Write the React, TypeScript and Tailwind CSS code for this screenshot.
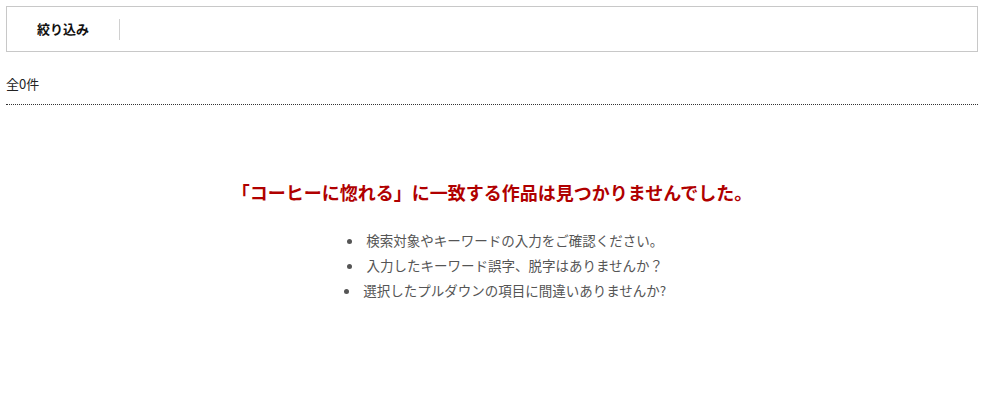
import React from "react";

const tips = [
  "検索対象やキーワードの入力をご確認ください。",
  "入力したキーワード誤字、脱字はありませんか？",
  "選択したプルダウンの項目に間違いありませんか?",
];

export default function App() {
  return (
    <div
      className="min-h-screen bg-white px-[6px] pt-[6px] text-[13px] text-[#222]"
      style={{ fontFamily: '"Noto Sans CJK JP", "Noto Sans", sans-serif' }}
    >
      {/* Filter bar */}
      <div className="flex h-[46px] items-center border border-[#c8c8c8]">
        <div className="flex h-[21px] w-[113px] items-center justify-center border-r border-[#d0d0d0] font-bold text-[#111]">
          絞り込み
        </div>
      </div>

      {/* Count */}
      <div className="mt-[22px] border-b border-dotted border-[#333] pb-[10px] leading-[20px]">
        全0件
      </div>

      {/* Empty result */}
      <div className="mt-[75px] text-center">
        <h2 className="text-[18px] font-bold leading-[24px] text-[#b00000]">
          「コーヒーに惚れる」に一致する作品は見つかりませんでした。
        </h2>
        <ul className="mt-[24px] list-inside list-disc pl-[26px] text-[13.5px] leading-[25px] text-[#555]">
          {tips.map((t) => (
            <li key={t}>{t}</li>
          ))}
        </ul>
      </div>
    </div>
  );
}
